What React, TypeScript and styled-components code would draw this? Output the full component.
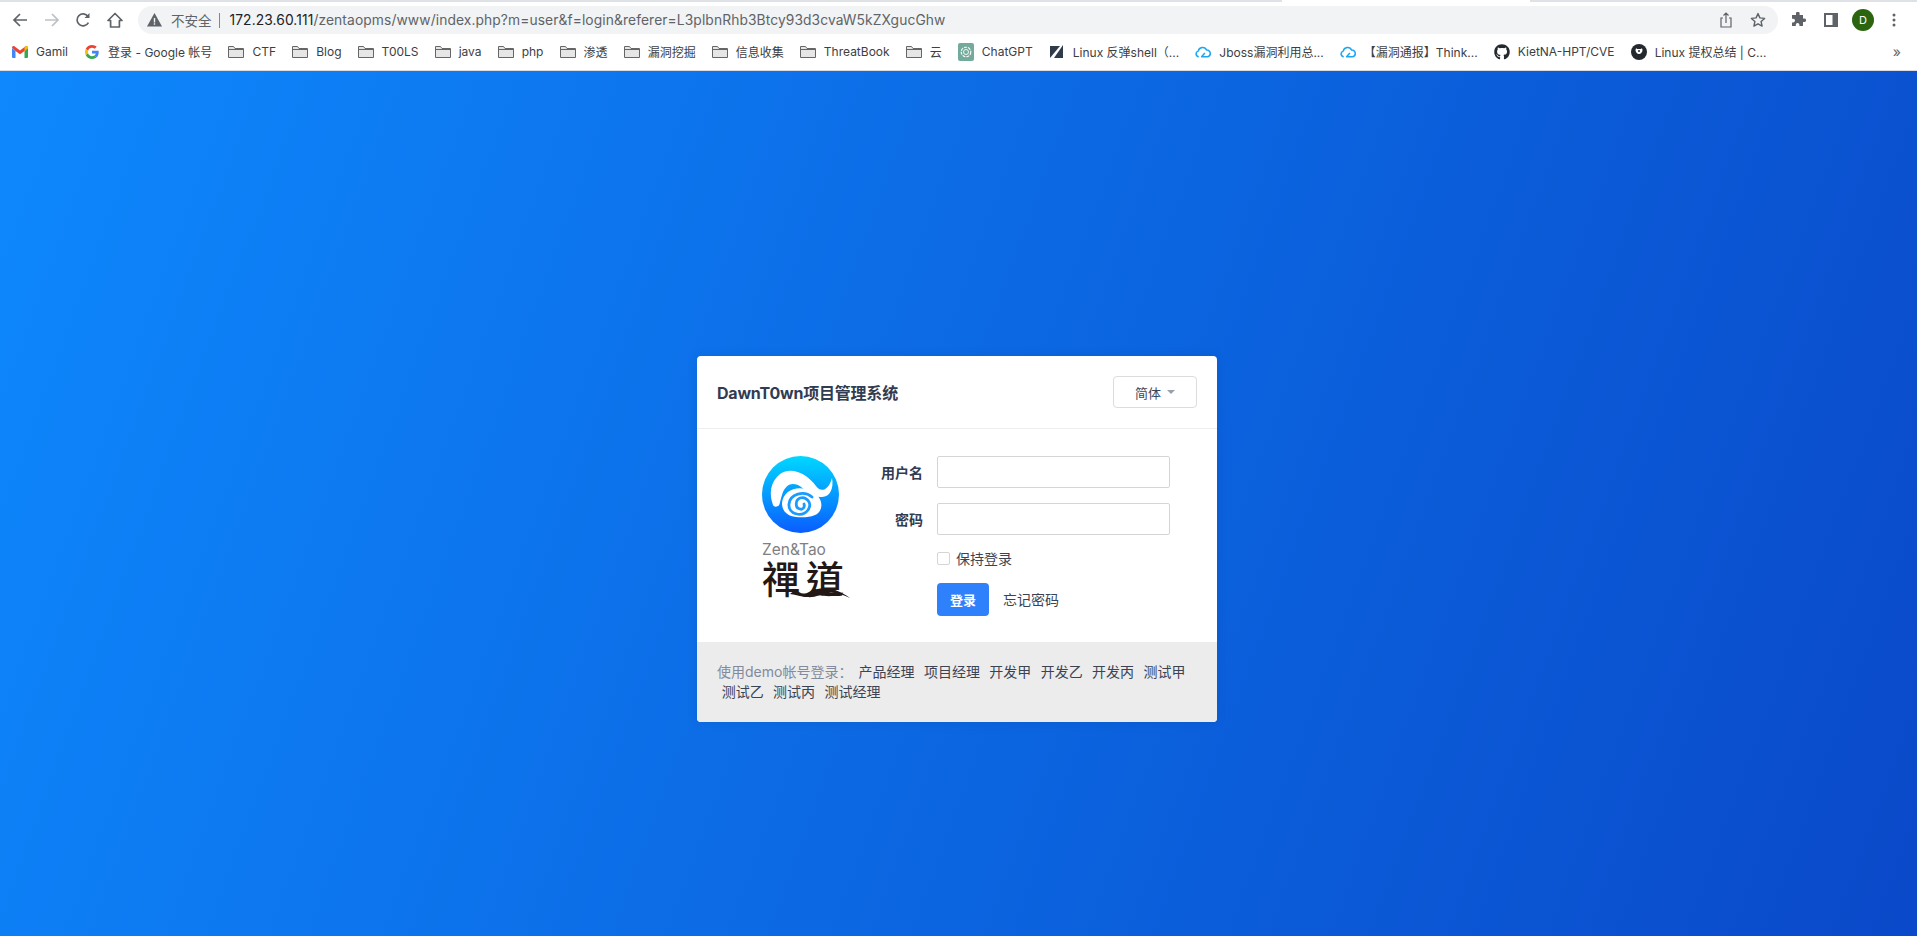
import styled, { createGlobalStyle } from "styled-components";
import { FaGithub } from "react-icons/fa";

const UI_FONT = `Inter, "Liberation Sans", "Noto Sans CJK SC", sans-serif`;

const GlobalStyle = createGlobalStyle`
    html, body {
        margin: 0;
        height: 100%;
        font-family: ${UI_FONT};
    }
    #root {
        height: 100%;
    }
    * {
        box-sizing: border-box;
    }
`;

const Page = styled.div`
    height: 936px;
    display: flex;
    flex-direction: column;
    overflow: hidden;
`;

const Chrome = styled.header`
    height: 71px;
    background: #fff;
    display: flex;
    flex-direction: column;
`;

const TabStrip = styled.div`
    height: 2px;
    display: flex;
`;

const TabEdge = styled.div<{ $width?: number }>`
    background: #dee1e6;
    flex: ${(p) => (p.$width ? `0 0 ${p.$width}px` : "1")};
`;

const TabGap = styled.div`
    flex: 0 0 248px;
`;

const Toolbar = styled.div`
    height: 32px;
    padding: 4px 0 0 12px;
    display: flex;
    align-items: center;
`;

const NavIcon = styled.svg<{ $dim?: boolean }>`
    width: 16px;
    height: 16px;
    flex: none;
    margin-right: 15.5px;
    fill: none;
    stroke: ${(p) => (p.$dim ? "#bdc1c6" : "#5f6368")};
    stroke-width: 1.7;
`;

const Omnibox = styled.div`
    flex: 0 0 1640px;
    height: 28px;
    padding: 0 12px 0 9px;
    background: #f1f3f4;
    border-radius: 14px;
    display: flex;
    align-items: center;
    font-size: 13px;
    color: #5f6368;
`;

const NotSecure = styled.span`
    margin-left: 9px;
    font-size: 13.5px;
`;

const Divider = styled.span`
    width: 1px;
    height: 15px;
    margin: 0 10px 0 7px;
    background: #80868b;
`;

const Url = styled.span`
    flex: 1;
    font-size: 13.8px;
    letter-spacing: 0.1px;
    color: #5f6368;
    white-space: nowrap;
`;

const Host = styled.span`
    color: #202124;
`;

const OmniIcon = styled.svg<{ $gap: number | "auto" }>`
    margin-left: ${(p) => (p.$gap === "auto" ? "auto" : `${p.$gap}px`)};
    flex: none;
`;

const Avatar = styled.span`
    width: 22px;
    height: 22px;
    margin: 0 18px 0 14px;
    border-radius: 50%;
    background: #2c6510;
    color: #fff;
    font-size: 11px;
    display: flex;
    align-items: center;
    justify-content: center;
`;

const Bookmarks = styled.nav`
    height: 37px;
    padding: 0 0 1px 12px;
    border-bottom: 1px solid #dadce0;
    display: flex;
    align-items: center;
    font-size: 12px;
    color: #3c4043;
    white-space: nowrap;
`;

const Bookmark = styled.span`
    display: flex;
    align-items: center;
    gap: 8px;
    margin-right: 16.1px;
`;

const IconSlot = styled.span`
    width: 16px;
    height: 16px;
    display: flex;
    align-items: center;
    justify-content: center;
    flex: none;
`;

const More = styled.span`
    margin-left: auto;
    margin-right: 16px;
    font-size: 14px;
    color: #5f6368;
`;

const Main = styled.main`
    flex: 1;
    padding: 285px 3px 0 0;
    display: flex;
    justify-content: center;
    align-items: flex-start;
    background: linear-gradient(110deg, #0e88fd 0%, #0a49c9 100%);
`;

const Card = styled.section`
    width: 520px;
    height: 366px;
    background: #fff;
    border-radius: 4px;
    overflow: hidden;
    display: flex;
    flex-direction: column;
    box-shadow: 0 0 12px rgba(0, 0, 0, 0.08);
`;

const CardHeader = styled.div`
    height: 73px;
    flex: none;
    padding: 0 20px;
    border-bottom: 1px solid #eee;
    display: flex;
    align-items: center;
    justify-content: space-between;
`;

const Title = styled.h1`
    margin: 0;
    font-size: 16px;
    font-weight: 700;
    letter-spacing: -0.2px;
    color: #313c52;
`;

const LangButton = styled.button`
    width: 84px;
    height: 32px;
    padding: 0;
    background: #fff;
    border: 1px solid #dcdcdc;
    border-radius: 4px;
    font: inherit;
    font-size: 13px;
    color: #3c4353;
    display: flex;
    align-items: center;
    justify-content: center;
    gap: 6px;
`;

const Caret = styled.span`
    width: 0;
    height: 0;
    border-left: 4px solid transparent;
    border-right: 4px solid transparent;
    border-top: 4px solid #9aa0ab;
`;

const CardBody = styled.div`
    flex: 1;
    display: flex;
    padding-top: 27px;
`;

const LogoBox = styled.div`
    width: 174px;
    padding-left: 65px;
    flex: none;
    position: relative;
`;

const LogoMark = styled.svg`
    width: 77px;
    height: 77px;
    display: block;
`;

const LogoLatin = styled.div`
    margin-top: 8px;
    font-size: 15.5px;
    line-height: 18px;
    color: #7f7f82;
    white-space: nowrap;
`;

const LogoCjk = styled.div`
    font-family: "Noto Sans CJK TC", sans-serif;
    font-size: 38px;
    font-weight: 500;
    line-height: 36px;
    letter-spacing: 6px;
    color: #231815;
    white-space: nowrap;
`;

const LogoWave = styled.svg`
    position: absolute;
    left: 93px;
    top: 128px;
    width: 60px;
    height: 14px;
`;

const Form = styled.form`
    display: grid;
    grid-template-columns: 52px 233px;
    grid-auto-rows: min-content;
    column-gap: 14px;
    row-gap: 14.5px;
    align-items: center;
    font-size: 14px;
`;

const Label = styled.label`
    text-align: right;
    font-weight: 700;
    color: #313c52;
    white-space: nowrap;
`;

const Input = styled.input`
    width: 233px;
    height: 32px;
    border: 1px solid #d5d5d5;
    border-radius: 2px;
    background: #fff;
    outline: none;
`;

const KeepRow = styled.label`
    grid-column: 2;
    height: 20px;
    margin-top: -1px;
    display: flex;
    align-items: center;
    gap: 6px;
    font-size: 14px;
    color: #3c4353;
`;

const Checkbox = styled.span`
    width: 13px;
    height: 13px;
    border: 1px solid #d5d5d5;
    border-radius: 2px;
`;

const Actions = styled.div`
    grid-column: 2;
    display: flex;
    align-items: center;
    gap: 14px;
`;

const Submit = styled.button`
    width: 52px;
    height: 33px;
    padding: 0;
    border: 0;
    border-radius: 4px;
    background: #2f80fb;
    color: #fff;
    font: inherit;
    font-size: 13px;
    font-weight: 700;
`;

const Forgot = styled.a`
    color: #3c4353;
`;

const CardFooter = styled.div`
    height: 80px;
    flex: none;
    padding: 20px 20px 0;
    background: #ececec;
    font-size: 14px;
    line-height: 20px;
    color: #838a9d;
`;

const DemoLabel = styled.span`
    margin-right: 1.5px;
`;

const DemoLink = styled.a`
    display: inline-block;
    margin: 0 4.7px;
    color: #3c4353;
`;

const Back = () => (
    <NavIcon viewBox="0 0 16 16">
        <path d="M15 8H2M8 2 2 8l6 6" />
    </NavIcon>
);

const Forward = () => (
    <NavIcon viewBox="0 0 16 16" $dim>
        <path d="M1 8h13M8 2l6 6-6 6" />
    </NavIcon>
);

const Reload = () => (
    <NavIcon viewBox="0 0 16 16">
        <path d="M13.4 10.6A6 6 0 1 1 13 4.4" />
        <path d="M14.5 1v5h-5z" fill="#5f6368" stroke="none" />
    </NavIcon>
);

const HomeIcon = () => (
    <NavIcon viewBox="0 0 16 16">
        <path d="M8 1.5 1 8.5h2.6V15h8.800V8.500H15z" strokeLinejoin="round" />
    </NavIcon>
);

const Warning = () => (
    <svg width="15" height="14" viewBox="0 0 15 14">
        <path d="M7.5 0 15 13.5H0z" fill="#5f6368" />
        <path d="M6.8 5h1.400v4.400H6.800zM6.800 10.300h1.400v1.500H6.800z" fill="#f1f3f4" />
    </svg>
);

const ShareIcon = () => (
    <OmniIcon $gap="auto" width="16" height="18" viewBox="0 0 16 18" fill="none" stroke="#5f6368" strokeWidth="1.2">
        <path d="M5 7H3v9h10V7h-2M8 12V2M5.500 4.500 8 2l2.500 2.500" />
    </OmniIcon>
);

const StarIcon = () => (
    <OmniIcon $gap={16} width="16" height="16" viewBox="0 0 16 16" fill="none" stroke="#5f6368" strokeWidth="1.4">
        <path d="m8 1.600 1.900 4.300 4.700.5-3.500 3.100 1 4.600L8 11.800l-4.100 2.300 1-4.600L1.400 6.400l4.700-.5z" strokeLinejoin="round" />
    </OmniIcon>
);

const PuzzleIcon = () => (
    <OmniIcon $gap={12} width="16" height="16" viewBox="0 0 16 16" fill="#5f6368">
        <path d="M6 1.500a1.800 1.800 0 0 1 3.600 0V3H13v3.400h1.300a1.800 1.800 0 0 1 0 3.600H13v4H9.400v-1.300a1.800 1.800 0 0 0-3.600 0V14H2v-3.600h1.200a1.800 1.800 0 0 0 0-3.600H2V3h4z" />
    </OmniIcon>
);

const PanelIcon = () => (
    <OmniIcon $gap={18} width="14" height="14" viewBox="0 0 14 14">
        <path d="M0 0h14v14H0z" fill="#5f6368" />
        <path d="M2 2h6.500v10H2z" fill="#fff" />
    </OmniIcon>
);

const Kebab = () => (
    <svg width="4" height="14" viewBox="0 0 4 14" fill="#5f6368">
        <circle cx="2" cy="2" r="1.5" />
        <circle cx="2" cy="7" r="1.5" />
        <circle cx="2" cy="12" r="1.5" />
    </svg>
);

const Folder = () => (
    <svg width="16" height="14" viewBox="0 0 16 14">
        <path d="M.5 12.500v-11h5l1.500 2h8.500v9z" fill="#e6e6e6" stroke="#666" />
        <path d="M.5 4.500h15" stroke="#666" />
    </svg>
);

const Gmail = () => (
    <svg width="16" height="12" viewBox="0 0 16 12">
        <path d="M0 2v9a1 1 0 0 0 1 1h2.500V5z" fill="#4285f4" />
        <path d="M16 2v9a1 1 0 0 1-1 1h-2.500V5z" fill="#34a853" />
        <path d="M0 1.800C0 .3 1.600-.4 2.700.4L8 4.400l5.300-4c1.100-.8 2.700-.1 2.700 1.400L12.500 5 8 8.300 3.500 5z" fill="#ea4335" />
        <path d="M12.500 5 16 1.800C16 .3 14.400-.4 13.300.4L12.500 1z" fill="#fbbc04" />
    </svg>
);

const GoogleG = () => (
    <svg width="14" height="14" viewBox="0 0 48 48">
        <path fill="#ea4335" d="M24 9.500c3.500 0 6.700 1.200 9.200 3.600l6.900-6.900C35.900 2.400 30.400 0 24 0 14.600 0 6.500 5.400 2.600 13.200l8 6.200C12.400 13.700 17.700 9.500 24 9.500z" />
        <path fill="#4285f4" d="M47 24.500c0-1.600-.1-3.100-.4-4.500H24v9h12.900c-.6 3-2.300 5.500-4.800 7.200l7.700 6C44.300 38 47 31.800 47 24.500z" />
        <path fill="#fbbc05" d="M10.600 28.600c-.5-1.400-.8-3-.8-4.600s.3-3.200.8-4.600l-8-6.200C.9 16.500 0 20.100 0 24s.9 7.500 2.600 10.800z" />
        <path fill="#34a853" d="M24 48c6.500 0 11.900-2.100 15.900-5.800l-7.700-6c-2.200 1.500-5 2.300-8.200 2.300-6.300 0-11.600-4.200-13.400-9.900l-8 6.200C6.500 42.600 14.600 48 24 48z" />
    </svg>
);

const ChatGptIcon = () => (
    <svg width="16" height="18" viewBox="0 0 16 18">
        <rect width="16" height="18" rx="2" fill="#74aa9c" />
        <circle cx="8" cy="9" r="4.800" fill="none" stroke="#fff" strokeWidth="1.100" strokeDasharray="3 1" />
        <circle cx="8" cy="9" r="2.500" fill="none" stroke="#fff" strokeWidth=".9" />
    </svg>
);

const SlashIcon = () => (
    <svg width="14" height="15" viewBox="0 0 14 15">
        <path d="M0 2h10L0 14z" fill="#2f3a4a" />
        <path d="M13 1v13H4z" fill="#2f3a4a" />
    </svg>
);

const CloudIcon = () => (
    <svg width="17" height="13" viewBox="0 0 17 13" fill="none" stroke="#1aa5f5" strokeWidth="1.600">
        <path d="M4 12a3 3 0 0 1-.6-5.900A4.800 4.800 0 0 1 12.400 5 3.500 3.500 0 0 1 13 12H7l3.500-4" strokeLinejoin="round" />
    </svg>
);

const BadgeIcon = () => (
    <svg width="16" height="16" viewBox="0 0 16 16">
        <circle cx="8" cy="8" r="8" fill="#24292e" />
        <path d="M4.500 6c0-.8.3-1.500.8-1.800l1 .8h3.400l1-.8c.5.3.8 1 .8 1.800 0 2.200-1.500 4-3.500 4s-3.500-1.800-3.500-4z" fill="#fff" />
        <circle cx="8" cy="7" r="1" fill="#24292e" />
    </svg>
);

const ZentaoMark = () => (
    <LogoMark viewBox="0 0 77 77">
        <defs>
            <linearGradient id="zentao-blue" x1="0" y1="0" x2="0" y2="1">
                <stop offset="0" stopColor="#00d8ff" />
                <stop offset="1" stopColor="#0a5cff" />
            </linearGradient>
        </defs>
        <circle cx="38.5" cy="38.5" r="38.5" fill="url(#zentao-blue)" />
        <path
            d="M11 49C7 38 8 26 18 18C30 10 45 18 54 30C58 36 66 36 70 22C72 32 68 41 60 41C52 42 44 34 36 29C28 26 24 30 21 36C18 44 18 50 16 50C14 51 12 51 11 49Z"
            fill="#fff"
        />
        <path d="M20 47C21 35 33 30 44 33C55 36 61 44 59 52C57 61 45 62 34 61C25 60 20 55 20 47Z" fill="#fff" />
        <path
            d="M50 41C42 34 28 38 27 48C26 58 40 62 46 54C51 47 44 40 38 42C33 44 33 52 38 53C41 54 43 51 42 48"
            fill="none"
            stroke="#1a9cff"
            strokeWidth="2.800"
            strokeLinecap="round"
        />
    </LogoMark>
);

const BOOKMARK_FOLDERS = ["CTF", "Blog", "T00LS", "java", "php", "渗透", "漏洞挖掘", "信息收集", "ThreatBook", "云"];

const DEMO_USERS = ["产品经理", "项目经理", "开发甲", "开发乙", "开发丙", "测试甲", "测试乙", "测试丙", "测试经理"];

const BookmarkBar = () => (
    <Bookmarks>
        <Bookmark>
            <IconSlot><Gmail /></IconSlot>
            Gamil
        </Bookmark>
        <Bookmark>
            <IconSlot><GoogleG /></IconSlot>
            登录 - Google 帐号
        </Bookmark>
        {BOOKMARK_FOLDERS.map((name) => (
            <Bookmark key={name}>
                <IconSlot><Folder /></IconSlot>
                {name}
            </Bookmark>
        ))}
        <Bookmark>
            <IconSlot><ChatGptIcon /></IconSlot>
            ChatGPT
        </Bookmark>
        <Bookmark>
            <IconSlot><SlashIcon /></IconSlot>
            Linux 反弹shell（...
        </Bookmark>
        <Bookmark>
            <IconSlot><CloudIcon /></IconSlot>
            Jboss漏洞利用总...
        </Bookmark>
        <Bookmark>
            <IconSlot><CloudIcon /></IconSlot>
            【漏洞通报】Think...
        </Bookmark>
        <Bookmark>
            <IconSlot><FaGithub size={16} color="#24292e" /></IconSlot>
            KietNA-HPT/CVE
        </Bookmark>
        <Bookmark>
            <IconSlot><BadgeIcon /></IconSlot>
            Linux 提权总结 | C...
        </Bookmark>
        <More>»</More>
    </Bookmarks>
);

export default function App() {
    return (
        <Page>
            <GlobalStyle />
            <Chrome>
                <TabStrip>
                    <TabEdge $width={1282} />
                    <TabGap />
                    <TabEdge />
                </TabStrip>
                <Toolbar>
                    <Back />
                    <Forward />
                    <Reload />
                    <HomeIcon />
                    <Omnibox>
                        <Warning />
                        <NotSecure>不安全</NotSecure>
                        <Divider />
                        <Url>
                            <Host>172.23.60.111</Host>/zentaopms/www/index.php?m=user&amp;f=login&amp;referer=L3plbnRhb3Btcy93d3cvaW5kZXgucGhw
                        </Url>
                        <ShareIcon />
                        <StarIcon />
                    </Omnibox>
                    <PuzzleIcon />
                    <PanelIcon />
                    <Avatar>D</Avatar>
                    <Kebab />
                </Toolbar>
                <BookmarkBar />
            </Chrome>
            <Main>
                <Card>
                    <CardHeader>
                        <Title>DawnT0wn项目管理系统</Title>
                        <LangButton type="button">
                            简体
                            <Caret />
                        </LangButton>
                    </CardHeader>
                    <CardBody>
                        <LogoBox>
                            <ZentaoMark />
                            <LogoLatin>Zen&amp;Tao</LogoLatin>
                            <LogoCjk>禪道</LogoCjk>
                            <LogoWave viewBox="0 0 60 14">
                                <path d="M0 10c3-3 6-4 9-2 3 2 6 2 10 0 7-4 18-5 26-2 6 2 11 5 15 8-7-3-14-6-21-5-8 1-14 5-22 4-6 0-8-2-17-3z" fill="#231815" />
                            </LogoWave>
                        </LogoBox>
                        <Form>
                            <Label>用户名</Label>
                            <Input type="text" />
                            <Label>密码</Label>
                            <Input type="password" />
                            <KeepRow>
                                <Checkbox />
                                保持登录
                            </KeepRow>
                            <Actions>
                                <Submit type="button">登录</Submit>
                                <Forgot>忘记密码</Forgot>
                            </Actions>
                        </Form>
                    </CardBody>
                    <CardFooter>
                        <DemoLabel>使用demo帐号登录：</DemoLabel>
                        {DEMO_USERS.map((name) => (
                            <DemoLink key={name}>{name}</DemoLink>
                        ))}
                    </CardFooter>
                </Card>
            </Main>
        </Page>
    );
}
